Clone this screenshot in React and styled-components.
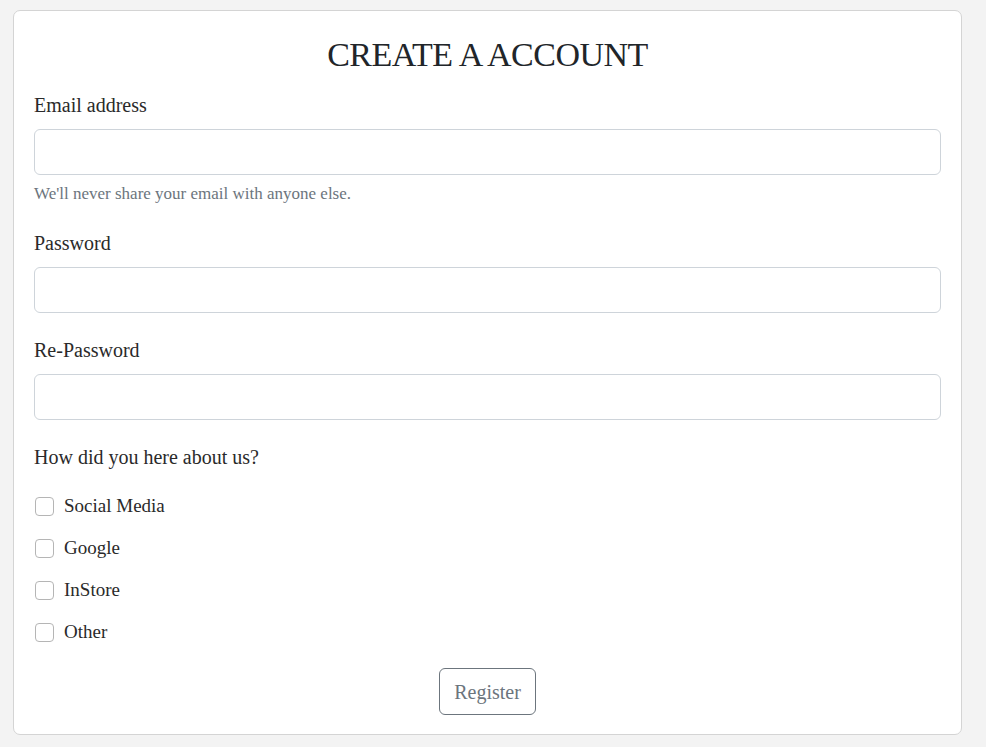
import React from 'react';
import styled, { createGlobalStyle } from 'styled-components';

/* register form card */

const GlobalStyle = createGlobalStyle`
  html, body {
    margin: 0;
    padding: 0;
    background: #f3f3f3;
  }
  body {
    font-family: "Liberation Serif", "Times New Roman", serif;
    color: #212529;
  }
`;

const Page = styled.div`
  padding: 10px 24px 12px 13px;
`;

const Card = styled.form`
  background: #fff;
  border: 1px solid #d4d4d4;
  border-radius: 7px;
  padding: 23px 20px 19px;
`;

const Title = styled.h1`
  margin: 0 0 14px;
  text-align: center;
  font-size: 34px;
  line-height: 42px;
  font-weight: normal;
  letter-spacing: -0.5px;
  color: #212529;
`;

const Group = styled.div`
  margin-bottom: 22px;
`;

const Label = styled.label`
  display: block;
  font-size: 20px;
  line-height: 30px;
  color: #2a2a2a;
`;

const Input = styled.input`
  display: block;
  box-sizing: border-box;
  width: 100%;
  height: 46px;
  margin-top: 9px;
  padding: 6px 12px;
  border: 1px solid #ced4da;
  border-radius: 6px;
  font-family: inherit;
  font-size: 20px;
  outline: none;
`;

const Help = styled.div`
  margin-top: 7px;
  font-size: 17px;
  line-height: 24px;
  color: #6c757d;
`;

const CheckList = styled.div`
  margin-top: 19px;
  display: flex;
  flex-direction: column;
  gap: 12px;
`;

const CheckRow = styled.label`
  display: flex;
  align-items: center;
  gap: 10px;
  height: 30px;
  font-size: 19px;
  color: #2a2a2a;
`;

const Box = styled.input`
  appearance: none;
  margin: 0 0 0 1px;
  width: 19px;
  height: 19px;
  border: 1px solid #b5b5b5;
  border-radius: 4px;
  background: #fff;
`;

const ButtonRow = styled.div`
  display: flex;
  justify-content: center;
  margin-top: 21px;
`;

const Button = styled.button`
  font-family: inherit;
  font-size: 20px;
  line-height: 30px;
  padding: 7.5px 14px;
  background: #fff;
  color: #6c757d;
  border: 1px solid #6c757d;
  border-radius: 6px;
`;

const sources = ['Social Media', 'Google', 'InStore', 'Other'];

const App = () => {
  return (
    <Page>
      <GlobalStyle />
      <Card onSubmit={(e) => e.preventDefault()}>
        <Title>CREATE A ACCOUNT</Title>
        <Group>
          <Label>Email address</Label>
          <Input type="email" />
          <Help>We'll never share your email with anyone else.</Help>
        </Group>
        <Group>
          <Label>Password</Label>
          <Input type="password" />
        </Group>
        <Group>
          <Label>Re-Password</Label>
          <Input type="password" />
        </Group>
        <Label>How did you here about us?</Label>
        <CheckList>
          {sources.map((s) => (
            <CheckRow key={s}>
              <Box type="checkbox" />
              {s}
            </CheckRow>
          ))}
        </CheckList>
        <ButtonRow>
          <Button type="submit">Register</Button>
        </ButtonRow>
      </Card>
    </Page>
  );
};

export default App;
